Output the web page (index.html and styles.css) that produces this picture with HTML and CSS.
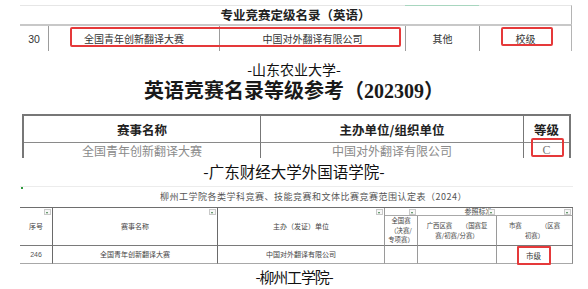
FILE: index.html
```html
<!DOCTYPE html>
<html lang="zh-CN">
<head>
<meta charset="utf-8">
<title>翻译大赛等级</title>
<link rel="stylesheet" href="styles.css">
</head>
<body>
<section class="s1">
  <div class="s1-title">专业竞赛定级名录（英语）</div>
  <div class="s1-row">
    <div class="c1 num">30</div>
    <div class="c1">全国青年创新翻译大赛</div>
    <div class="c1">中国对外翻译有限公司</div>
    <div class="c1">其他</div>
    <div class="c1">校级</div>
  </div>
  <span class="sel"></span>
  <span class="redbox rb1"></span>
  <span class="redbox rb2"></span>
</section>

<p class="cap cap1">-山东农业大学-</p>
<h1 class="title2">英语竞赛名录等级参考（202309）</h1>

<section class="t2">
  <div class="h2c">赛事名称</div>
  <div class="h2c">主办单位/组织单位</div>
  <div class="h2c">等级</div>
  <div class="d2c">全国青年创新翻译大赛</div>
  <div class="d2c">中国对外翻译有限公司</div>
  <div class="d2c grade">C</div>
  <span class="redbox rb3"></span>
</section>

<p class="cap cap2">-广东财经大学外国语学院-</p>

<section class="s3">
  <span class="dot"></span>
  <div class="s3-title">柳州工学院各类学科竞赛、技能竞赛和文体比赛竞赛范围认定表（2024）</div>
  <div class="t3">
    <div class="c3 hd col1 span2">序号</div>
    <div class="c3 hd col2 span2">赛事名称</div>
    <div class="c3 hd col3 span2">主办（发证）单位</div>
    <div class="c3 ref">参照标准</div>
    <div class="c3 hd col4 r2"><span class="ml">全国赛<br>（决赛/<br>专项赛）</span></div>
    <div class="c3 hd col5 r2"><span class="ml">广西区赛&emsp;&ensp;（国赛复<br>赛/初赛/分赛）</span></div>
    <div class="c3 hd col6 r2"><span class="ml">市赛&emsp;&emsp;&emsp;（区赛<br>初赛）</span></div>
    <span class="fb f1"></span>
    <span class="fb f2"></span>
    <span class="fb f3"></span>
    <span class="fb f4"></span>
    <span class="fb f5"></span>
    <span class="fb f6"></span>
    <div class="c3 col1 num3">246</div>
    <div class="c3 col2">全国青年创新翻译大赛</div>
    <div class="c3 col3">中国对外翻译有限公司</div>
    <div class="c3 col4"></div>
    <div class="c3 col5"></div>
    <div class="c3 col6 top"><span class="level">市级</span></div>
  </div>
</section>

<p class="cap cap3">-柳州工学院-</p>
</body>
</html>
```

FILE: styles.css
```css
* { box-sizing: border-box; margin: 0; padding: 0; }

body {
  width: 588px;
  height: 289px;
  overflow: hidden;
  background: #fff;
  padding-top: 5px;
  font-family: "Noto Sans CJK SC", sans-serif;
  color: #222;
}

.redbox {
  position: absolute;
  border: 2px solid #e5393a;
  border-radius: 2px;
}

/* ---------- section 1 ---------- */
.s1 {
  position: relative;
  margin-left: 20px;
  width: 552px;
}
.s1-title {
  height: 19px;
  border-top: 1px solid #e6e6e6;
  border-right: 1px solid #b4b4b4;
  text-align: center;
  font-weight: 700;
  font-size: 12.5px;
  line-height: 18px;
  color: #222;
}
.s1-row {
  display: grid;
  grid-template-columns: 28px 171px 186px 74px 92px;
  height: 27px;
  border-top: 2px solid #c8c8c8;
  border-right: 1px solid #b4b4b4;
}
.c1 {
  display: flex;
  align-items: center;
  justify-content: center;
  font-size: 10px;
  color: #333;
  border-left: 1px solid #9c9c9c;
}
.c1.num {
  border-left: none;
  font-family: "Liberation Sans", sans-serif;
  font-size: 10.5px;
}
.sel {
  position: absolute;
  left: 385px;
  top: 0;
  width: 74px;
  height: 1px;
  background: #a8d6bf;
}
.rb1 { left: 50px; top: 22px; width: 331px; height: 20px; }
.rb2 { left: 481px; top: 22px; width: 52px; height: 19px; }

/* ---------- captions ---------- */
.cap {
  text-align: center;
  color: #111;
  font-weight: 400;
}
.cap1 { margin-top: 10px; font-size: 14px; line-height: 16px; }
.cap2 { margin-top: 4px; font-size: 15.5px; line-height: 18px; }
.cap3 { margin-top: 4px; font-size: 15px; line-height: 18px; letter-spacing: -1.2px; }

/* ---------- section 2 ---------- */
.title2 {
  margin-top: 2px;
  text-align: center;
  font-family: "Liberation Serif", "Noto Sans CJK SC", serif;
  font-weight: 700;
  font-size: 20px;
  line-height: 24px;
  color: #1a1a1a;
}
.t2 {
  position: relative;
  margin: 11px 0 0 22px;
  width: 549px;
  border: 2px solid #777;
  border-bottom: none;
  display: grid;
  grid-template-columns: 236px 263px 46px;
  grid-template-rows: 27px 15px;
}
.h2c, .d2c {
  display: flex;
  align-items: center;
  justify-content: center;
}
.h2c {
  font-weight: 700;
  font-size: 12.5px;
  color: #222;
  border-bottom: 1px solid #8a8a8a;
}
.d2c {
  font-size: 12px;
  line-height: 15px;
  color: #8a8a8a;
}
.h2c + .h2c, .d2c + .d2c { border-left: 1px solid #777; }
.grade {
  font-family: "Liberation Serif", serif;
  color: #777;
}
.rb3 { left: 507px; top: 22px; width: 33px; height: 19px; }

/* ---------- section 3 ---------- */
.s3 {
  position: relative;
  margin: 6px 0 0 20px;
  width: 553px;
}
.dot {
  position: absolute;
  left: 1px;
  top: 1px;
  width: 2px;
  height: 2px;
  background: #2f9a3f;
}
.s3-title {
  height: 21px;
  border-top: 1px solid #ececec;
  padding-left: 140px;
  font-size: 9px;
  letter-spacing: 0.5px;
  line-height: 20px;
  color: #555;
}
.t3 {
  display: grid;
  grid-template-columns: 33px 165px 167px 33px 79px 76px;
  grid-template-rows: 8px 30px 18px;
  border-top: 1px solid #6e6e6e;
}
.c3 {
  display: flex;
  align-items: center;
  justify-content: center;
  text-align: center;
  font-size: 7px;
  line-height: 9px;
  color: #444;
  border-right: 1px solid #9a9a9a;
  border-bottom: 1px solid #a8a8a8;
}
.ml {
  display: block;
  font-size: 6.4px;
  line-height: 9.4px;
  white-space: nowrap;
}
.c3.hd { border-bottom-color: #7a7a7a; }
.col1 { grid-column: 1; border-right-color: #6a6a6a; }
.col2 { grid-column: 2; border-right-color: #6a6a6a; }
.col3 { grid-column: 3; }
.col4 { grid-column: 4; }
.col5 { grid-column: 5; }
.col6 { grid-column: 6; border-right-color: #8a8a8a; }
.span2 { grid-row: 1 / 3; }
.r2 { grid-row: 2; }
.ref {
  grid-row: 1;
  grid-column: 4 / 7;
  border-right-color: #8a8a8a;
  line-height: 7px;
}
.num3 {
  font-family: "Liberation Sans", sans-serif;
  color: #555;
}
.top { align-items: flex-start; }
.level {
  display: flex;
  align-items: center;
  justify-content: center;
  width: 34px;
  height: 19px;
  margin-left: -2px;
  border: 2px solid #e5393a;
  border-radius: 1px;
  font-size: 7.5px;
  color: #333;
}

.fb {
  grid-row: 1;
  justify-self: end;
  align-self: start;
  position: relative;
  width: 7px;
  height: 6px;
  margin: 1px 2px 0 0;
  border: 1px solid #c9c9c9;
  background: #f7f7f7;
}
.fb::after {
  content: "";
  position: absolute;
  left: 1px;
  top: 1.5px;
  border-left: 1.5px solid transparent;
  border-right: 1.5px solid transparent;
  border-top: 2px solid #3d7f46;
}
.f1 { grid-column: 1; }
.f2 { grid-column: 2; }
.f3 { grid-column: 3; }
.f4 { grid-column: 4; }
.f5 { grid-column: 5; }
.f6 { grid-column: 6; }
```
